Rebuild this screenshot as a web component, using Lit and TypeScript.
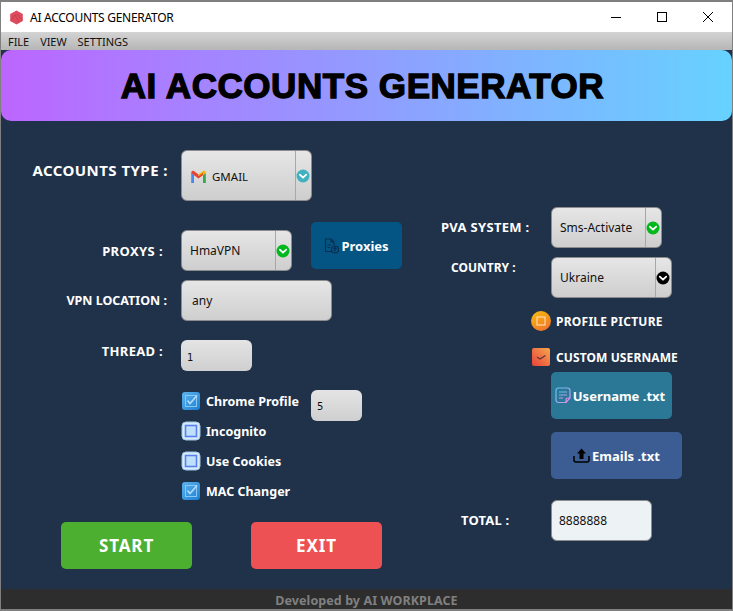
import { LitElement, html, css, svg } from "lit";
import { customElement } from "lit/decorators.js";

const chevron = svg`<path d="M3.8 5.6 L7 8.7 L10.2 5.6" fill="none" stroke="#fff" stroke-width="1.8" stroke-linecap="round" stroke-linejoin="round"/>`;

@customElement("app-root")
export class AppRoot extends LitElement {
  static styles = css`
    :host { display: block; width: 733px; height: 611px; font-family: "Noto Sans", sans-serif; }
    * { box-sizing: border-box; }
    .win { width: 733px; height: 611px; display: flex; flex-direction: column; border: 1px solid #7f7f7f; border-top-width: 2px; border-bottom-width: 2px; background: #20324a; overflow: hidden; }
    .titlebar { height: 30px; flex: none; background: #fff; display: flex; align-items: center; padding-left: 8px; gap: 6px; font-size: 12px; color: #000; }
    .titlebar .name { flex: 1; letter-spacing: -0.28px; }
    .ctl { width: 46px; height: 30px; display: flex; align-items: center; justify-content: center; }
    .ctls { display: flex; margin-right: 1px; }
    .menubar { height: 18px; flex: none; background: linear-gradient(#d4d4d4, #b6b6b6); display: flex; align-items: center; padding-left: 7px; gap: 11px; font-size: 11px; letter-spacing: -0.05px; color: #111; }
    .hero { height: 71px; flex: none; border-radius: 10px; background: linear-gradient(90deg, #bc66ff, #66d2ff); display: flex; align-items: center; justify-content: center; font-family: "Liberation Sans", sans-serif; font-weight: 700; font-size: 35px; color: #000; -webkit-text-stroke: 1.3px #000; letter-spacing: 0.55px; padding-right: 8px; }
    .main { flex: 1; display: flex; min-height: 0; }
    .left { width: 429px; flex: none; padding-top: 29px; display: flex; flex-direction: column; }
    .right { flex: 1; padding-top: 86px; display: flex; flex-direction: column; }
    .row { display: grid; grid-template-columns: 180px auto; justify-content: start; }
    .lbl { color: #fff; font-weight: 700; font-size: 13px; white-space: nowrap; text-align: right; line-height: 16px; }
    .combo { display: flex; background: linear-gradient(#e6e6e6, #cecece); border: 1px solid #8c8c8c; border-radius: 6px; color: #111; font-size: 12px; align-items: stretch; }
    .combo .val { flex: 1; display: flex; align-items: center; gap: 6px; padding-left: 8px; }
    .combo .arrow { width: 16px; flex: none; border-left: 1px solid #a8a8a8; display: flex; align-items: center; justify-content: center; padding-right: 1px; }
    .inp { background: linear-gradient(#e4e4e4, #cfcfcf); border-radius: 6px; font-size: 10px; font-weight: 400; color: #111; display: flex; align-items: center; padding-left: 6px; padding-top: 3px; font-family: "DejaVu Sans", sans-serif; }
    .btn { display: flex; align-items: center; justify-content: center; border-radius: 5px; color: #fff; font-weight: 700; font-size: 13px; }
    .r1 { height: 51px; }
    .r1 .lbl { font-size: 15px; letter-spacing: 0.45px; padding: 12px 13px 0 0; line-height: 16px; }
    .r1 .combo { width: 131px; height: 51px; }
    .r1 .val { padding-left: 8px; padding-top: 1px; font-size: 11.5px; gap: 5px; }
    .r2 { height: 49px; margin-top: 21px; grid-template-columns: 180px auto auto; }
    .r2 .lbl { padding: 21px 18px 0 0; letter-spacing: 0.4px; }
    .r2 .combo { width: 111px; height: 41px; margin-top: 8px; }
    .proxies { width: 91px; height: 47px; margin-left: 19px; background: #045583; gap: 2px; }
    .r3 { height: 41px; margin-top: 9px; }
    .r3 .lbl { padding: 13px 14px 0 0; font-size: 12.5px; }
    .r3 .combo { width: 151px; height: 41px; background: linear-gradient(#e6e6e6, #cfcfcf); }
    .r3 .val { padding-left: 10px; }
    .r4 { height: 31px; margin-top: 19px; }
    .r4 .lbl { padding: 3px 18px 0 0; letter-spacing: 0.3px; }
    .r4 .inp { width: 71px; height: 31px; }
    .checks { margin-top: 15px; margin-left: 180px; display: flex; flex-direction: column; }
    .chk { height: 30px; display: flex; align-items: center; gap: 5px; color: #fff; font-weight: 700; font-size: 12.5px; white-space: nowrap; }
    .chk .txt { width: 100px; }
    .chk .inp { width: 51px; height: 31px; margin-top: 8px; flex: none; }
    .chk svg { flex: none; }
    .actions { display: flex; gap: 59px; margin: 16px 0 0 60px; }
    .actions .btn { width: 131px; height: 47px; font-size: 17px; letter-spacing: 0.9px; }
    .start { background: #4caf30; }
    .exit { background: #ed5153; }
    .rr { display: grid; grid-template-columns: 121px auto; justify-content: start; }
    .rr .lbl { text-align: left; }
    .rr1 { height: 41px; }
    .rr1 .lbl { padding: 12px 0 0 11px; letter-spacing: 0.3px; }
    .rr1 .combo { width: 111px; height: 41px; }
    .rr2 { height: 41px; margin-top: 9px; }
    .rr2 .lbl { padding: 3px 0 0 21px; font-size: 12px; }
    .rr2 .combo { width: 121px; height: 41px; }
    .opt { display: flex; align-items: center; gap: 5px; color: #fff; font-weight: 700; font-size: 12px; height: 20px; margin-left: 101px; white-space: nowrap; }
    .o1 { margin-top: 13px; letter-spacing: 0.25px; }
    .o2 { margin-top: 16px; margin-left: 102px; gap: 6px; letter-spacing: 0.1px; }
    .user { width: 121px; height: 47px; margin: 5px 0 0 121px; background: #2b7896; gap: 1px; padding-right: 3px; }
    .mail { width: 131px; height: 47px; margin: 13px 0 0 121px; background: #3c5d93; gap: 2px; }
    .rr3 { height: 41px; margin-top: 21px; }
    .rr3 .lbl { padding: 12px 0 0 31px; letter-spacing: 0.2px; }
    .total { width: 101px; height: 41px; background: #edf3f5; border: 1px solid #8c8c8c; border-radius: 6px; font-size: 12px; color: #111; display: flex; align-items: center; padding-left: 7px; }
    .footer { height: 20px; flex: none; background: #2d2d2d; color: #808080; font-weight: 700; font-size: 12.5px; letter-spacing: 0.08px; display: flex; align-items: center; justify-content: center; padding-top: 2px; }
  `;

  private arrow(color: string) {
    return html`<span class="arrow"><svg width="14" height="14" viewBox="0 0 14 14"><circle cx="7" cy="7" r="6.5" fill=${color}/>${chevron}</svg></span>`;
  }

  private checked() {
    return html`<svg width="20" height="20" viewBox="0 0 20 20">
      <defs><linearGradient id="cb" x1="0" y1="0" x2="1" y2="1"><stop offset="0" stop-color="#5cb4ee"/><stop offset="1" stop-color="#1c7fd4"/></linearGradient></defs>
      <rect x="1" y="1" width="18" height="18" rx="3" fill="url(#cb)"/>
      <rect x="4.5" y="4.5" width="11" height="11" fill="none" stroke="#8cc8f4" stroke-width="1"/>
      <path d="M6.5 9.5 L9 12.5 L16 4.5" fill="none" stroke="#b4dcf8" stroke-width="1.6"/>
    </svg>`;
  }

  private unchecked() {
    return html`<svg width="20" height="20" viewBox="0 0 20 20">
      <rect x="1" y="1" width="18" height="18" rx="4" fill="#d9ecfb" stroke="#9cc6e6" stroke-width="1"/>
      <rect x="4.5" y="4.5" width="11" height="11" fill="#bfe0fb" stroke="#5a80f0" stroke-width="1.6"/>
    </svg>`;
  }

  render() {
    return html`<div class="win">
      <div class="titlebar">
        <svg width="15" height="15" viewBox="0 0 15 15"><path d="M7.5 0.5 L13.8 4 V11 L7.5 14.5 L1.2 11 V4 Z" fill="#df4b5c"/><path d="M1.5 11 L6 5 L10 12 M13.5 10 L8 4" fill="none" stroke="#b73a4a" stroke-width=".7"/></svg>
        <span class="name">AI ACCOUNTS GENERATOR</span>
        <div class="ctls">
          <span class="ctl"><svg width="12" height="12" viewBox="0 0 12 12"><path d="M1 6.5 H11" stroke="#000" stroke-width="1"/></svg></span>
          <span class="ctl"><svg width="12" height="12" viewBox="0 0 12 12"><rect x="1.5" y="1.5" width="9" height="9" fill="none" stroke="#000" stroke-width="1"/></svg></span>
          <span class="ctl"><svg width="12" height="12" viewBox="0 0 12 12"><path d="M1 1 L11 11 M11 1 L1 11" stroke="#000" stroke-width="1"/></svg></span>
        </div>
      </div>
      <div class="menubar"><span>FILE</span><span>VIEW</span><span>SETTINGS</span></div>
      <div class="hero">AI ACCOUNTS GENERATOR</div>
      <div class="main">
        <div class="left">
          <div class="row r1">
            <div class="lbl">ACCOUNTS TYPE :</div>
            <div class="combo"><span class="val">
              <svg width="17" height="13" viewBox="0 0 17 13"><path d="M1.2 13 V3 L4 5 V13 Z" fill="#4a87ee"/><path d="M13 13 V5 L15.8 3 V13 Z" fill="#34a853"/><path d="M1.2 3.2 C1.2 .8 3 .3 4.2 1.2 L8.5 4.6 V8 L1.2 3.2 Z" fill="#e94335"/><path d="M8.5 4.6 L12.8 1.2 C14 .3 15.8 .8 15.8 3.2 L13 5.2 L8.5 8 Z" fill="#f4b400"/><path d="M4 5 L8.5 8.4 L13 5 V3 L8.5 6 L4 3 Z" fill="#e94335"/></svg>
              GMAIL</span>${this.arrow("#3fb1bf")}</div>
          </div>
          <div class="row r2">
            <div class="lbl">PROXYS :</div>
            <div class="combo"><span class="val">HmaVPN</span>${this.arrow("#00b81c")}</div>
            <div class="btn proxies">
              <svg width="15" height="16" viewBox="0 0 15 16" fill="none" stroke="#0b2c4e" stroke-width="1.1"><path d="M8 13.5 H1.5 V1 H7 L10 4 V7"/><path d="M7 1 V4 H10"/><path d="M3.5 7 H7 M3.5 9.5 H6"/><circle cx="11" cy="11.5" r="3.5"/><path d="M11 13.5 V9.5 M9.5 11 L11 9.5 L12.5 11"/></svg>
              Proxies
            </div>
          </div>
          <div class="row r3">
            <div class="lbl">VPN LOCATION :</div>
            <div class="combo"><span class="val">any</span></div>
          </div>
          <div class="row r4">
            <div class="lbl">THREAD :</div>
            <div class="inp">1</div>
          </div>
          <div class="checks">
            <div class="chk">${this.checked()}<span class="txt">Chrome Profile</span><div class="inp">5</div></div>
            <div class="chk">${this.unchecked()}<span class="txt">Incognito</span></div>
            <div class="chk">${this.unchecked()}<span class="txt">Use Cookies</span></div>
            <div class="chk">${this.checked()}<span class="txt">MAC Changer</span></div>
          </div>
          <div class="actions">
            <div class="btn start">START</div>
            <div class="btn exit">EXIT</div>
          </div>
        </div>
        <div class="right">
          <div class="rr rr1">
            <div class="lbl">PVA SYSTEM :</div>
            <div class="combo"><span class="val">Sms-Activate</span>${this.arrow("#00b81c")}</div>
          </div>
          <div class="rr rr2">
            <div class="lbl">COUNTRY :</div>
            <div class="combo"><span class="val">Ukraine</span>${this.arrow("#000")}</div>
          </div>
          <div class="opt o1">
            <svg width="20" height="20" viewBox="0 0 20 20"><defs><linearGradient id="po" x1="0.2" y1="0" x2="0.8" y2="1"><stop offset="0" stop-color="#f9b90f"/><stop offset="1" stop-color="#f0702c"/></linearGradient></defs><circle cx="10" cy="10" r="10" fill="url(#po)"/><rect x="6" y="6" width="8" height="8" fill="none" stroke="#ffd9a8" stroke-width="1.2"/></svg>
            PROFILE PICTURE
          </div>
          <div class="opt o2">
            <svg width="18" height="18" viewBox="0 0 18 18"><defs><linearGradient id="cu" x1="0" y1="1" x2="1" y2="0"><stop offset="0" stop-color="#e8413c"/><stop offset="1" stop-color="#f5a74b"/></linearGradient></defs><rect width="18" height="18" rx="2" fill="url(#cu)"/><path d="M5 9 L8 11 L13.5 7.5" fill="none" stroke="#5b3340" stroke-width="1.2"/></svg>
            CUSTOM USERNAME
          </div>
          <div class="btn user">
            <svg width="17" height="17" viewBox="0 0 17 17" fill="none" stroke-width="1.2"><defs><linearGradient id="us" x1="0" y1="0" x2="1" y2="1"><stop offset="0" stop-color="#58c4f0"/><stop offset="1" stop-color="#e58cf0"/></linearGradient></defs><path d="M11 15.5 H3.5 Q1 15.5 1 13 V3.5 Q1 1 3.5 1 H12.5 Q15 1 15 3.5 V11 Z" stroke="url(#us)"/><path d="M4 5 H12 M4 8 H12 M4 11 H8" stroke="url(#us)"/><path d="M11 15.5 V12.5 Q11 11 13 11 H15" stroke="#e58cf0"/></svg>
            Username .txt
          </div>
          <div class="btn mail">
            <svg width="17" height="15" viewBox="0 0 17 15"><path d="M1 8 V12 Q1 14 3 14 H14 Q16 14 16 12 V8" fill="none" stroke="#000" stroke-width="1.5"/><path d="M8.5 0.5 L13 5.5 H10.5 V11 H6.5 V5.5 H4 Z" fill="#000"/></svg>
            Emails .txt
          </div>
          <div class="rr rr3">
            <div class="lbl">TOTAL :</div>
            <div class="total">8888888</div>
          </div>
        </div>
      </div>
      <div class="footer">Developed by AI WORKPLACE</div>
    </div>`;
  }
}
